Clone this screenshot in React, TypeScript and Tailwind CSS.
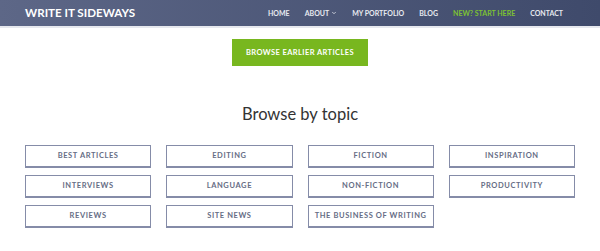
import { ChevronDown } from 'lucide-react';

const navItems = ['HOME', 'ABOUT', 'MY PORTFOLIO', 'BLOG', 'NEW? START HERE', 'CONTACT'];

const topics = [
  'BEST ARTICLES',
  'EDITING',
  'FICTION',
  'INSPIRATION',
  'INTERVIEWS',
  'LANGUAGE',
  'NON-FICTION',
  'PRODUCTIVITY',
  'REVIEWS',
  'SITE NEWS',
  'THE BUSINESS OF WRITING',
];

export default function App() {
  return (
    <div className="w-[600px] h-[251px] bg-white overflow-hidden font-['Lato','Liberation_Sans',sans-serif]">
      <header className="h-[26px] flex items-center justify-between pl-[25px] pr-[37px] bg-gradient-to-r from-[#5d6787] to-[#3f4a6b] shadow-[0_2px_0_#e6e8ee]">
        <span className="text-white font-bold text-[11.6px] leading-none">WRITE IT SIDEWAYS</span>
        <nav className="flex items-center gap-[15px]">
          {navItems.map((item) => (
            <span
              key={item}
              className={`flex items-center text-[7px] font-bold leading-none ${
                item === 'NEW? START HERE' ? 'text-[#7dc232]' : 'text-[#e8eaf0]'
              }`}
            >
              {item}
              {item === 'ABOUT' && <ChevronDown className="w-[6px] h-[6px] ml-[2px]" strokeWidth={3} />}
            </span>
          ))}
        </nav>
      </header>

      <div className="flex justify-center mt-[13px]">
        <button
          type="button"
          className="w-[136px] h-[27px] bg-[#78b71f] text-white text-[7.5px] font-bold tracking-[0.4px] flex items-center justify-center"
        >
          BROWSE EARLIER ARTICLES
        </button>
      </div>

      <h2 className="text-center text-[16.5px] text-[#333333] mt-[40px] leading-none">Browse by topic</h2>

      <div className="grid grid-cols-4 gap-x-[15px] gap-y-[7px] px-[25px] mt-[22.5px]">
        {topics.map((topic) => (
          <div
            key={topic}
            className="h-[23px] border border-[#858ca8] border-b-2 flex items-center justify-center text-[7.5px] font-bold tracking-[0.6px] text-[#666d85]"
          >
            {topic}
          </div>
        ))}
      </div>
    </div>
  );
}
